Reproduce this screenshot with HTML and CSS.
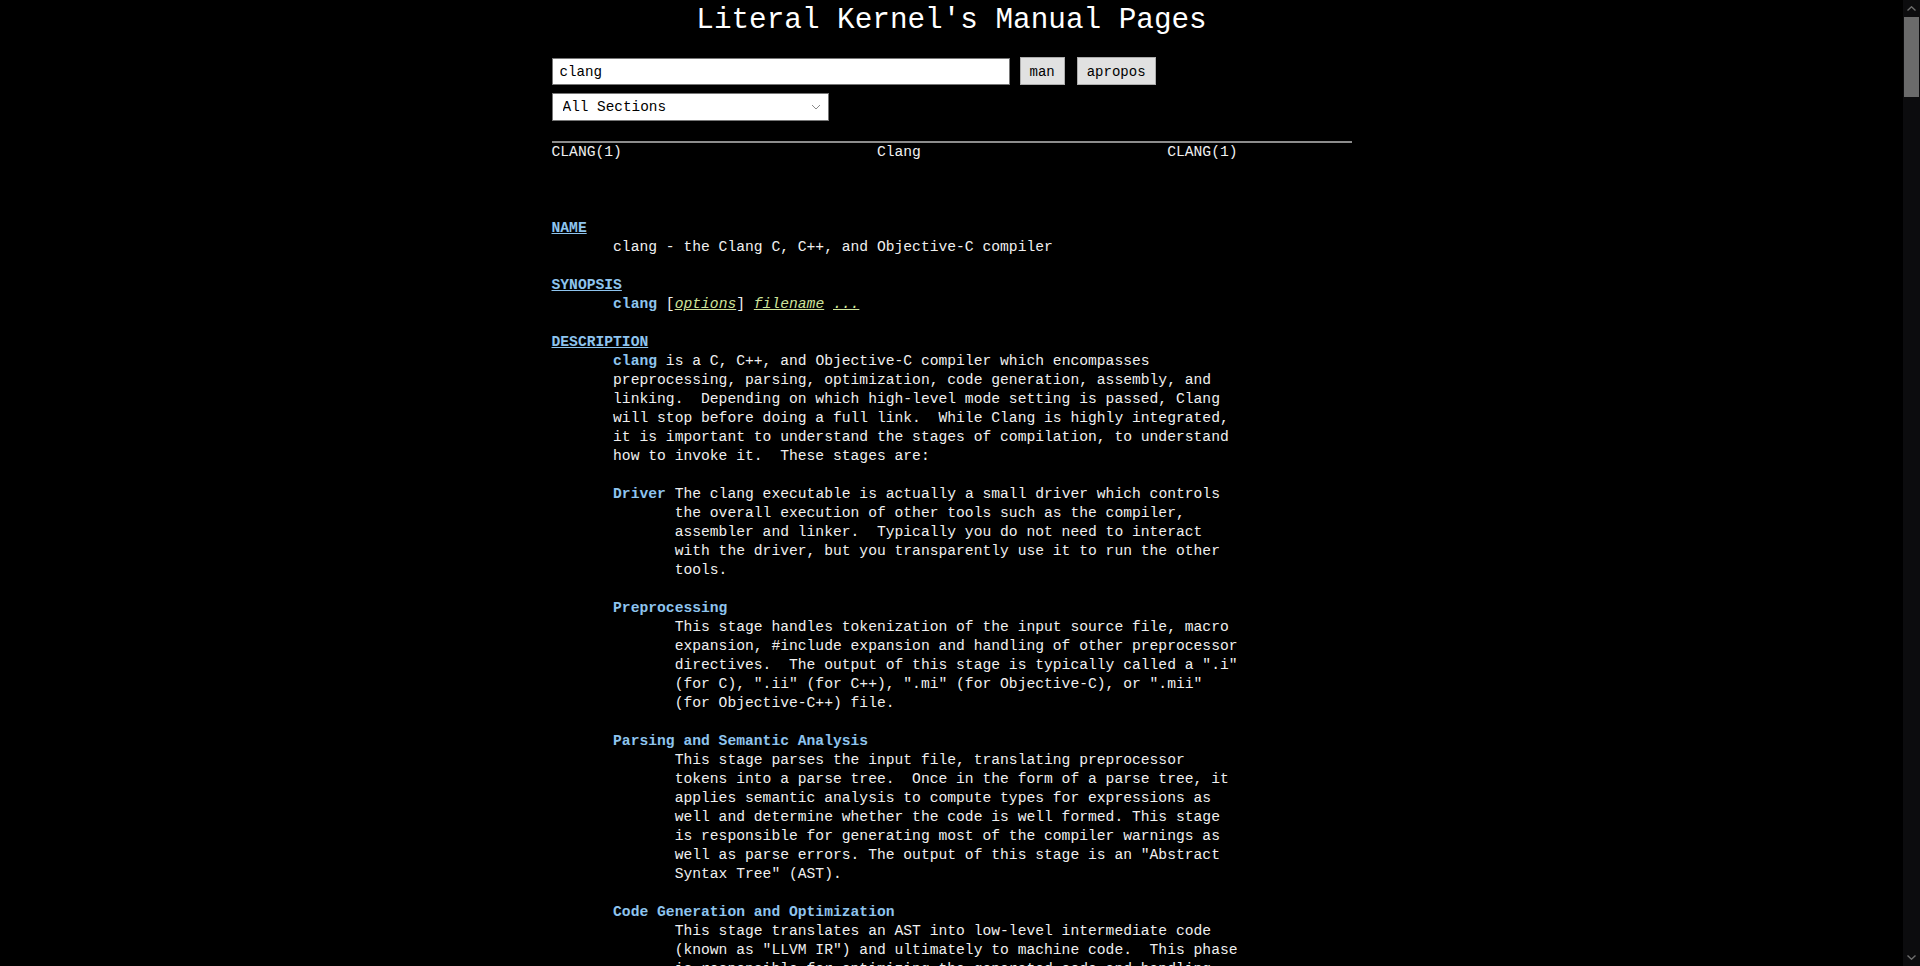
FILE: index.html
```html
<!DOCTYPE html>
<html lang="en">
<head>
<meta charset="utf-8">
<title>clang(1) - Literal Kernel's Manual Pages</title>
<link rel="stylesheet" href="styles.css">
</head>
<body>
<div class="app">
<div class="viewport">
<div class="page">
  <h1 class="title">Literal Kernel's Manual Pages</h1>
  <form class="search">
    <div class="row">
      <input class="query" type="text" value="clang">
      <button class="btn btn-man" type="button">man</button>
      <button class="btn btn-apropos" type="button">apropos</button>
    </div>
    <div class="row row-sel">
      <div class="sel-wrap">
        <select class="sel"><option>All Sections</option></select>
        <svg class="chev" width="10" height="6" viewBox="0 0 10 6"><path d="M1 1 L5 5 L9 1" fill="none" stroke="#8a8a8a" stroke-width="1"/></svg>
      </div>
    </div>
  </form>
  <hr class="rule">
<pre class="man">CLANG(1)                             Clang                            CLANG(1)



<b class="sh">NAME</b>
       clang - the Clang C, C++, and Objective-C compiler

<b class="sh">SYNOPSIS</b>
       <b>clang</b> [<i>options</i>] <i>filename</i> <i>...</i>

<b class="sh">DESCRIPTION</b>
       <b>clang</b> is a C, C++, and Objective-C compiler which encompasses
       preprocessing, parsing, optimization, code generation, assembly, and
       linking.  Depending on which high-level mode setting is passed, Clang
       will stop before doing a full link.  While Clang is highly integrated,
       it is important to understand the stages of compilation, to understand
       how to invoke it.  These stages are:

       <b>Driver</b> The clang executable is actually a small driver which controls
              the overall execution of other tools such as the compiler,
              assembler and linker.  Typically you do not need to interact
              with the driver, but you transparently use it to run the other
              tools.

       <b>Preprocessing</b>
              This stage handles tokenization of the input source file, macro
              expansion, #include expansion and handling of other preprocessor
              directives.  The output of this stage is typically called a ".i"
              (for C), ".ii" (for C++), ".mi" (for Objective-C), or ".mii"
              (for Objective-C++) file.

       <b>Parsing and Semantic Analysis</b>
              This stage parses the input file, translating preprocessor
              tokens into a parse tree.  Once in the form of a parse tree, it
              applies semantic analysis to compute types for expressions as
              well and determine whether the code is well formed. This stage
              is responsible for generating most of the compiler warnings as
              well as parse errors. The output of this stage is an "Abstract
              Syntax Tree" (AST).

       <b>Code Generation and Optimization</b>
              This stage translates an AST into low-level intermediate code
              (known as "LLVM IR") and ultimately to machine code.  This phase
              is responsible for optimizing the generated code and handling
              target-specific code generation.  The output of this stage is
              typically called a ".s" file or "assembly" file.

              Clang also supports the use of an integrated assembler, in which
              the code generator produces object files directly. This avoids
              the overhead of generating the ".s" file and of calling the
              target assembler.

       <b>Assembler</b>
              This stage runs the target assembler to translate the output of
              the compiler into a target object file. The output of this stage
              is typically called a ".o" file or "object" file.

       <b>Linker</b> This stage runs the target linker to merge multiple object files
              into an executable or dynamic library. The output of this stage
              is typically called an "a.out", ".dylib" or ".so" file.

       <b>Clang Static Analyzer</b>

       The Clang Static Analyzer is a tool that scans source code to try to
       find bugs through code analysis.  This tool uses many parts of Clang
       and is built into the same driver.  Please see &lt;https://clang-
       analyzer.llvm.org&gt; for more details on how to use the static analyzer.

<b class="sh">OPTIONS</b>
   <b>Stage Selection Options</b>
       <b>-E</b>     Run the preprocessor stage.

       <b>-fsyntax-only</b>
              Run the preprocessor, parser and semantic analysis stages.

       <b>-S</b>     Run the previous stages as well as LLVM generation and optimiza&#8208;
              tion stages and target-specific code generation, producing an
              assembly file.

       <b>-c</b>     Run all of the above, plus the assembler, generating a target
              ".o" object file.

       <b>no stage selection option</b>
              If no stage selection option is specified, all stages above are
              run, and the linker is run to combine the results into an exe&#8208;
              cutable or shared library.

   <b>Language Selection and Mode Options</b>
       <b>-x</b> &lt;language&gt;
              Treat subsequent input files as having type language.

       <b>-std</b>=&lt;standard&gt;
              Specify the language standard to compile for.

              Supported values for the C language are:
                 c89
                 c90
                 iso9899:1990
                     ISO C 1990

                 iso9899:199409
                     ISO C 1990 with amendment 1

                 gnu89
                 gnu90
                     ISO C 1990 with GNU extensions

                 c99
                 iso9899:1999
                     ISO C 1999

                 gnu99
                     ISO C 1999 with GNU extensions

                 c11
                 iso9899:2011
                     ISO C 2011

                 gnu11
                     ISO C 2011 with GNU extensions

                 c17
                 iso9899:2017
                     ISO C 2017

                 gnu17
                     ISO C 2017 with GNU extensions

              The default C language standard is gnu17, except on PS4, where
              it is gnu99.

              Supported values for the C++ language are:
                 c++98
                 c++03
                     ISO C++ 1998 with amendments

                 gnu++98
                 gnu++03
                     ISO C++ 1998 with amendments and GNU extensions

                 c++11
                     ISO C++ 2011 with amendments

                 gnu++11
                     ISO C++ 2011 with amendments and GNU extensions

                 c++14
                     ISO C++ 2014 with amendments

                 gnu++14
                     ISO C++ 2014 with amendments and GNU extensions

                 c++17
                     ISO C++ 2017 with amendments

                 gnu++17
                     ISO C++ 2017 with amendments and GNU extensions

                 c++20
                     ISO C++ 2020 with amendments

                 gnu++20
                     ISO C++ 2020 with amendments and GNU extensions

                 c++2b
                     Working draft for ISO C++ 2023

                 gnu++2b
                     Working draft for ISO C++ 2023 with GNU extensions

              The default C++ language standard is gnu++14.

              Supported values for the OpenCL language are:
                 cl1.0
                     OpenCL 1.0

                 cl1.1
                     OpenCL 1.1

                 cl1.2
                     OpenCL 1.2

                 cl2.0
                     OpenCL 2.0

              The default OpenCL language standard is cl1.0.

              Supported values for the CUDA language are:
                 cuda
                     NVIDIA CUDA(tm)

       <b>-stdlib</b>=&lt;library&gt;
              Specify the C++ standard library to use; supported options are
              libstdc++ and libc++. If not specified, platform default will be
              used.

       <b>-rtlib</b>=&lt;library&gt;
              Specify the compiler runtime library to use; supported options
              are libgcc and compiler-rt. If not specified, platform default
              will be used.

       <b>-ansi</b>  Same as -std=c89.

       <b>-ObjC</b>, <b>-ObjC++</b>
              Treat source input files as Objective-C and Object-C++ inputs
              respectively.

       <b>-trigraphs</b>
              Enable trigraphs.

       <b>-ffreestanding</b>
              Indicate that the file should be compiled for a freestanding,
              not a hosted, environment. Note that it is assumed that a
              freestanding environment will additionally provide memcpy,
              memmove, memset and memcmp implementations, as these are needed
              for efficient codegen for many programs.

       <b>-fno-builtin</b>
              Disable special handling and optimizations of builtin functions
              like strlen() and malloc().

       <b>-fmath-errno</b>
              Indicate that math functions should be treated as updating
              errno.

       <b>-fpascal-strings</b>
              Enable support for Pascal-style strings with "\pfoo".

       <b>-fms-extensions</b>
              Enable support for Microsoft extensions.

       <b>-fmsc-version</b>=
              Set _MSC_VER. Defaults to 1300 on Windows. Not set otherwise.

       <b>-fborland-extensions</b>
              Enable support for Borland extensions.

       <b>-fwritable-strings</b>
              Make all string literals default to writable.  This disables
              uniquing of strings and other optimizations.

       <b>-flax-vector-conversions</b>
              Allow loose type checking rules for implicit vector conversions.

       <b>-fblocks</b>
              Enable the "Blocks" language feature.

       <b>-fobjc-abi-version</b>=version
              Select the Objective-C ABI version to use. Available versions
              are 1 (legacy "fragile" ABI), 2 (non-fragile ABI 1), and 3 (non-
              fragile ABI 2).

       <b>-fobjc-nonfragile-abi-version</b>=&lt;version&gt;
              Select the Objective-C non-fragile ABI version to use by
              default. This will only be used as the Objective-C ABI when the
              non-fragile ABI is enabled (either via <b>-fobjc-nonfragile-abi</b>,
              or because it is the platform default).

       <b>-fobjc-nonfragile-abi</b>, <b>-fno-objc-nonfragile-abi</b>
              Enable use of the Objective-C non-fragile ABI. On platforms for
              which this is the default ABI, it can be disabled with
              <b>-fno-objc-nonfragile-abi</b>.

   <b>Target Selection Options</b>
       Clang fully supports cross compilation as an inherent part of its
       design.  Depending on how your version of Clang is configured, it may
       have support for a number of cross compilers, or may only support a
       native target.

       <b>-arch</b> &lt;architecture&gt;
              Specify the architecture to build for (Mac OS X specific).

       <b>-target</b> &lt;architecture&gt;
              Specify the architecture to build for (all platforms).

       <b>-mmacosx-version-min</b>=&lt;version&gt;
              When building for macOS, specify the minimum version supported
              by your application.

       <b>-miphoneos-version-min</b>
              When building for iPhone OS, specify the minimum version
              supported by your application.

       <b>--print-supported-cpus</b>
              Print out a list of supported processors for the given target
              (specified through --target=&lt;architecture&gt; or -arch
              &lt;architecture&gt;). If no target is specified, the system default
              target will be used.

       <b>-mcpu</b>=?, <b>-mtune</b>=?
              Acts as an alias for --print-supported-cpus

       <b>-march</b>=&lt;cpu&gt;
              Specify that Clang should generate code for a specific processor
              family member and later.  For example, if you specify
              -march=i486, the compiler is allowed to generate instructions
              that are valid on i486 and later processors, but which may not
              exist on earlier ones.

   <b>Code Generation Options</b>
       <b>-O0</b>, <b>-O1</b>, <b>-O2</b>, <b>-O3</b>, <b>-Ofast</b>, <b>-Os</b>, <b>-Oz</b>, <b>-Og</b>, <b>-O</b>, <b>-O4</b>
              Specify which optimization level to use:
                 <b>-O0</b> Means "no optimization": this level compiles the
                 fastest and generates the most debuggable code.

                 <b>-O1</b> Somewhere between <b>-O0</b> and <b>-O2</b>.

                 <b>-O2</b> Moderate level of optimization which enables most
                 optimizations.

                 <b>-O3</b> Like <b>-O2</b>, except that it enables optimizations that
                 take longer to perform or that may generate larger code (in
                 an attempt to make the program run faster).

                 <b>-Ofast</b> Enables all the optimizations from <b>-O3</b> along with
                 other aggressive optimizations that may violate strict
                 compliance with language standards.

                 <b>-Os</b> Like <b>-O2</b> with extra optimizations to reduce code size.

                 <b>-Oz</b> Like <b>-Os</b> (and thus <b>-O2</b>), but reduces code size
                 further.

                 <b>-Og</b> Like <b>-O1</b>. In future versions, this option might
                 disable different optimizations in order to improve
                 debuggability.

                 <b>-O</b> Equivalent to <b>-O1</b>.

                 <b>-O4</b> and higher
                    Currently equivalent to <b>-O3</b>

       <b>-g</b>, <b>-gline-tables-only</b>, <b>-gmodules</b>
              Control debug information output.  Note that Clang debug
              information works best at <b>-O0</b>.  When more than one option
              starting with <b>-g</b> is specified, the last one wins:
                 <b>-g</b> Generate debug information.

                 <b>-gline-tables-only</b> Generate only line table debug
                 information. This allows for symbolicated backtraces with
                 inlining information, but does not include any information
                 about variables, their locations or types.

                 <b>-gmodules</b> Generate debug information that contains
                 external references to types defined in Clang modules or
                 precompiled headers instead of emitting redundant debug type
                 information into every object file.
</pre>
</div>
</div>
<div class="scrollbar" aria-hidden="true">
  <div class="sb-btn"><svg width="9" height="5" viewBox="0 0 9 5"><path d="M0.5 4.5 L4.5 0.8 L8.5 4.5" fill="none" stroke="#6e6e6e" stroke-width="1.4"/></svg></div>
  <div class="sb-track"><div class="sb-thumb"></div></div>
  <div class="sb-btn"><svg width="9" height="5" viewBox="0 0 9 5"><path d="M0.5 0.5 L4.5 4.2 L8.5 0.5" fill="none" stroke="#6e6e6e" stroke-width="1.4"/></svg></div>
</div>
</div>
</body>
</html>
```

FILE: styles.css
```css
html {
  color-scheme: dark;
  background: #000;
}

body {
  margin: 0;
  background: #000;
  color: #f0f0f0;
  font-family: "Liberation Mono", "DejaVu Sans Mono", monospace;
  overflow: hidden;
}

.app {
  display: flex;
  height: 100vh;
}

.viewport {
  flex: 1;
  min-width: 0;
  overflow-y: auto;
  scrollbar-width: none;
}

.scrollbar {
  width: 17px;
  flex: none;
  display: flex;
  flex-direction: column;
  background: #0c0c0e;
}

.sb-btn {
  height: 17px;
  display: flex;
  align-items: center;
  justify-content: center;
  flex: none;
}

.sb-track {
  flex: 1;
  padding: 0 1px 0 1px;
}

.sb-thumb {
  height: 80px;
  background: #6b6b6b;
}

.page {
  width: 800px;
  margin: 0 auto;
}

.title {
  margin: 3px 0 0;
  font-size: 29.33px;
  line-height: 36px;
  font-weight: normal;
  text-align: center;
  color: #fff;
}

.search {
  margin: 18px 0 0;
  display: flex;
  flex-direction: column;
}

.row {
  display: flex;
  align-items: center;
  height: 28px;
}

.row-sel {
  margin-top: 8px;
}

.query {
  color-scheme: light;
  box-sizing: border-box;
  width: 458px;
  height: 27px;
  margin: 1px 0 0;
  padding: 0 7px;
  border: 1px solid #767676;
  background: #fff;
  color: #000;
  font-family: inherit;
  font-size: 14.2px;
  outline: none;
}

.btn {
  color-scheme: light;
  box-sizing: border-box;
  height: 28px;
  margin: 0;
  padding: 1px 9px 0;
  border: 1px solid #adadad;
  background: #e1e1e1;
  color: #000;
  font-family: inherit;
  font-size: 14px;
}

.btn-man {
  margin-left: 10px;
}

.btn-apropos {
  margin-left: 12px;
}

.sel-wrap {
  position: relative;
  width: 277px;
  height: 28px;
}

.sel {
  color-scheme: light;
  appearance: none;
  -webkit-appearance: none;
  box-sizing: border-box;
  width: 100%;
  height: 28px;
  margin: 0;
  padding: 0 10px;
  border: 1px solid #767676;
  border-radius: 0;
  background: #fff;
  color: #000;
  font-family: inherit;
  font-size: 14.4px;
}

.chev {
  position: absolute;
  right: 8px;
  top: 11px;
  pointer-events: none;
}

.rule {
  margin: 20px 0 0;
  height: 0;
  border: 0;
  border-top: 2px solid #8c8c8c;
}

.man {
  margin: 0 0 40px;
  font-family: inherit;
  font-size: 14.67px;
  line-height: 19px;
  color: #f0f0f0;
  white-space: pre;
}

.man b {
  color: #8ec4ee;
  font-weight: bold;
}

.man b.sh {
  text-decoration: underline;
}

.man i {
  color: #cfe39a;
  font-style: italic;
  text-decoration: underline;
}
```
